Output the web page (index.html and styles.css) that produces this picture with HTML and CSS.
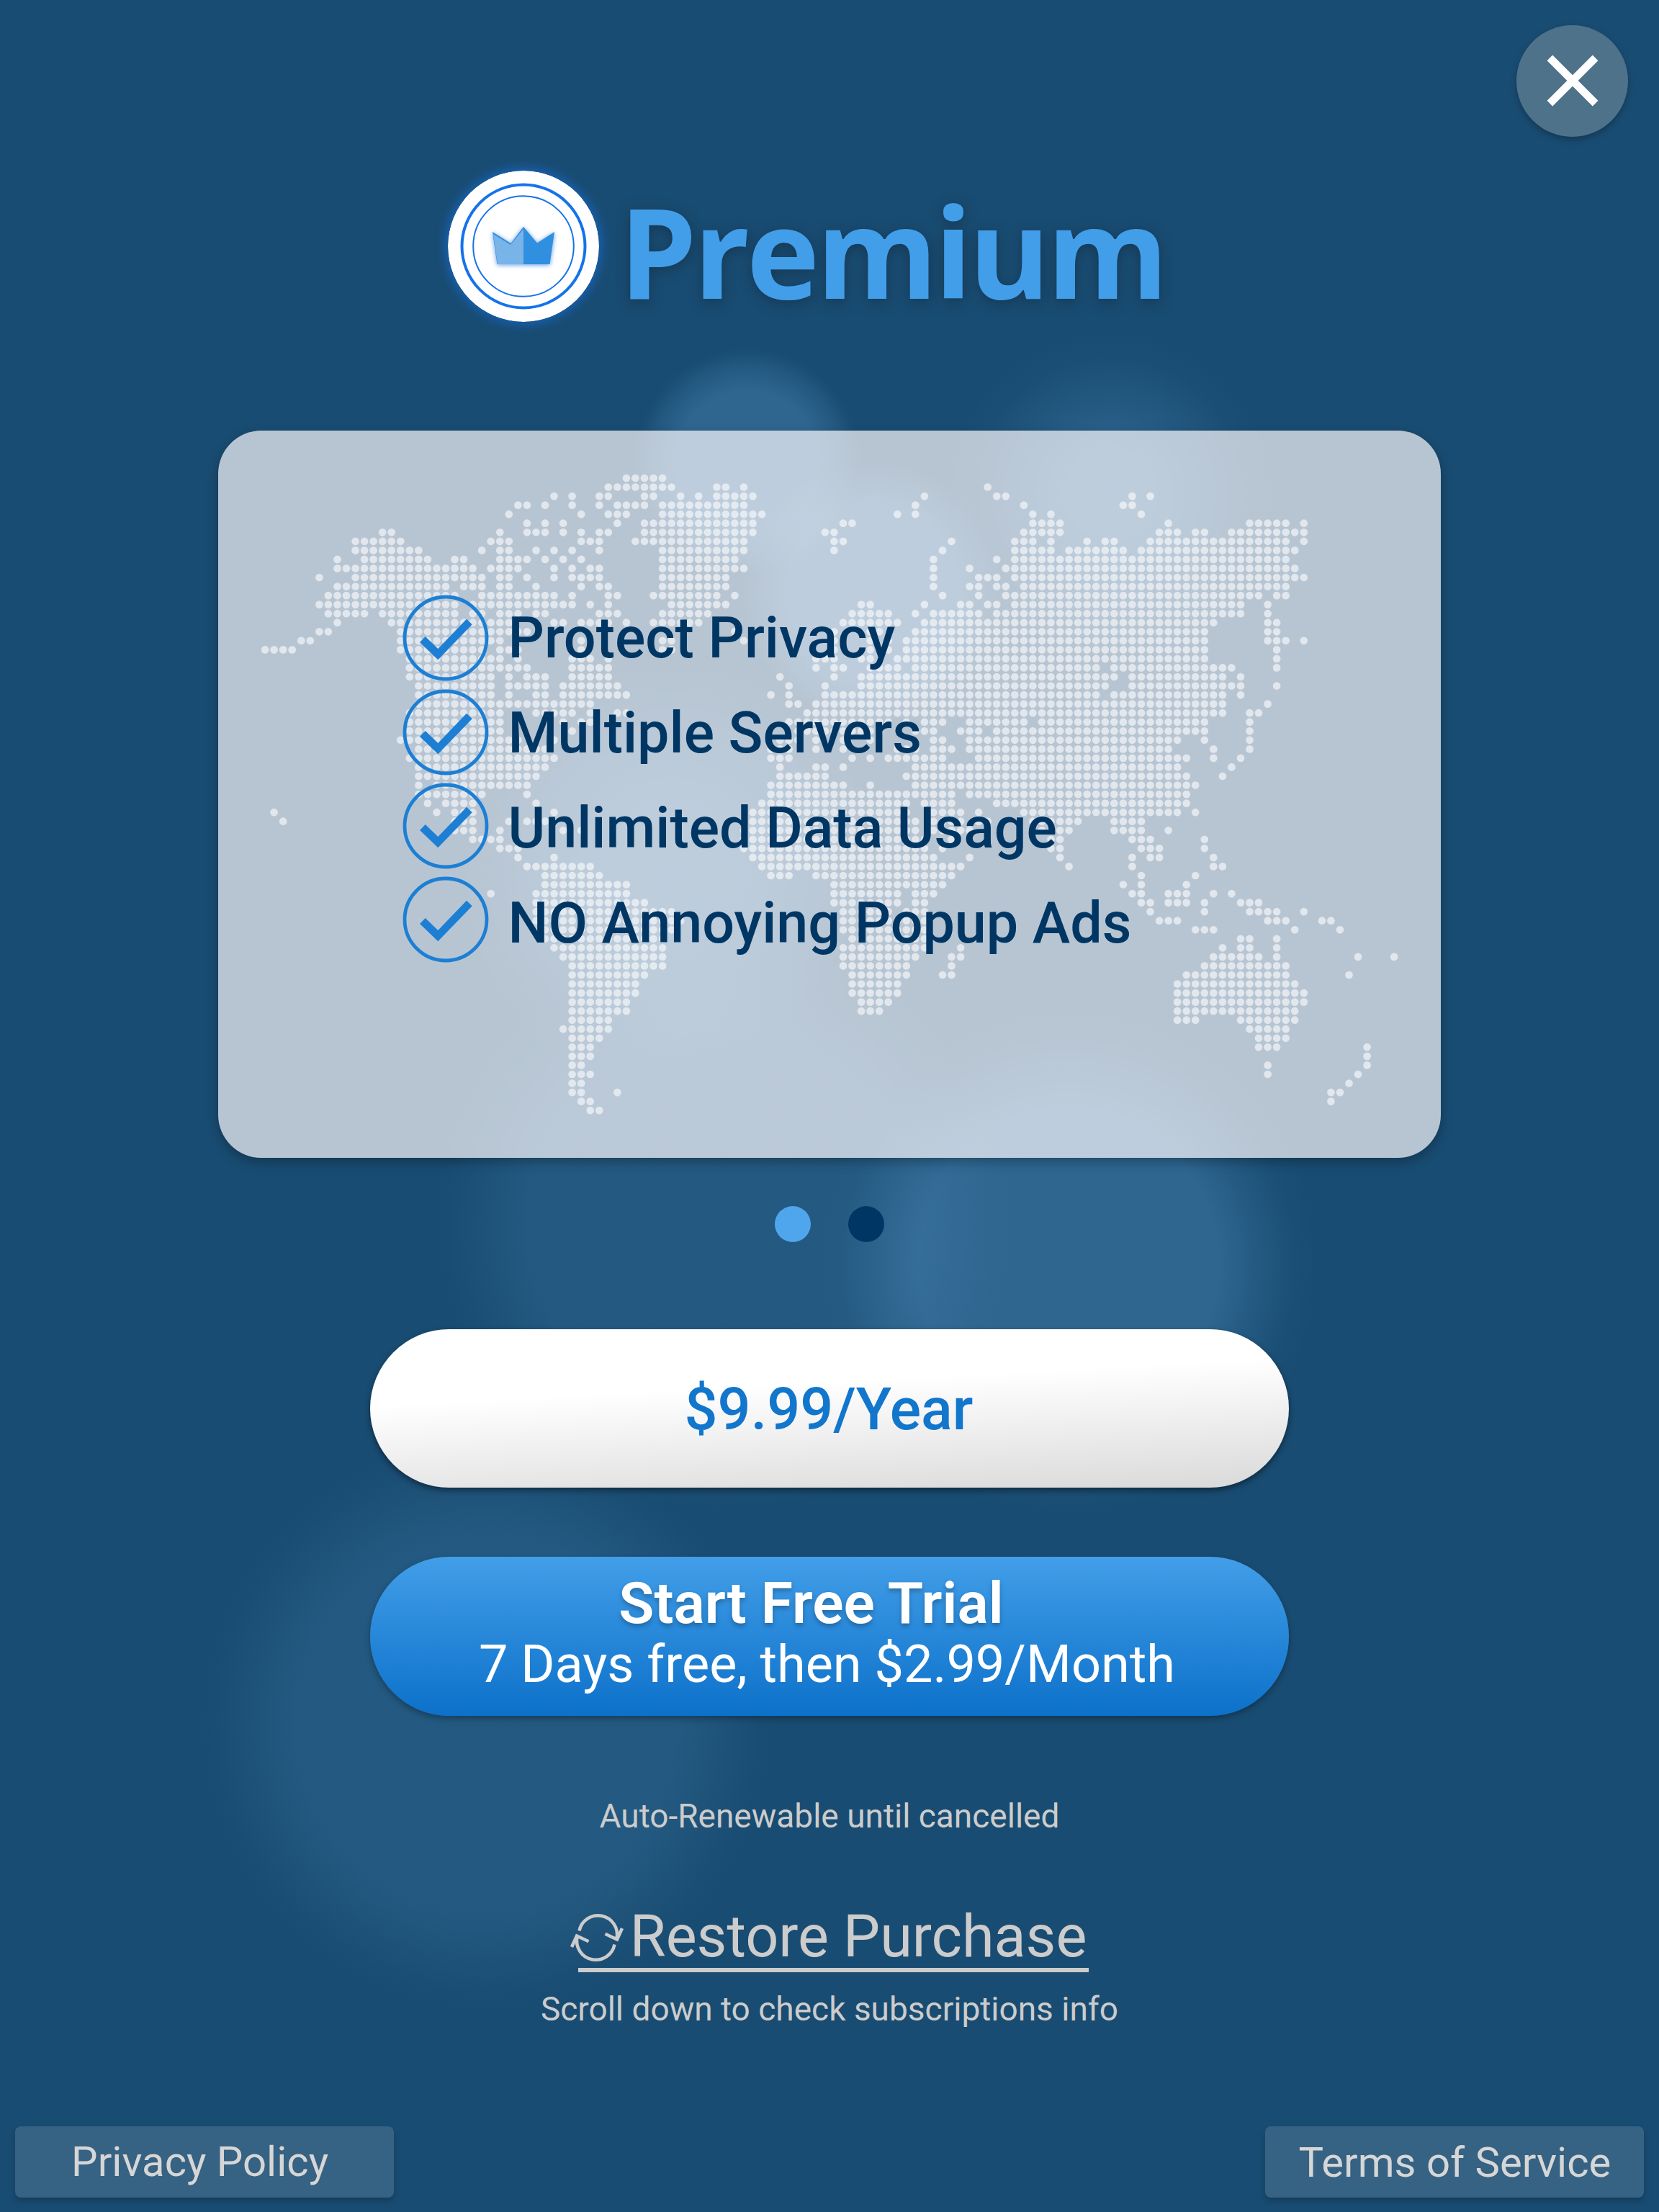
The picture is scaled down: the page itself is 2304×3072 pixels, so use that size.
FILE: index.html
```html
<!DOCTYPE html>
<html lang="en">
<head>
<meta charset="utf-8">
<title>Premium</title>
<link rel="stylesheet" href="styles.css">
</head>
<body>
<main class="page">
  <div class="topbar">
    <button class="close" aria-label="Close">
      <svg viewBox="-40 -40 80 80" width="80" height="80"><path d="M-31.6-31.6 31.6 31.6M31.6-31.6-31.6 31.6" stroke="#fff" stroke-width="10.7" fill="none"/></svg>
    </button>
  </div>

  <header class="brand">
    <svg class="badge" viewBox="-105 -105 210 210">
      <circle r="105" fill="#fff"/>
      <circle r="85.5" fill="none" stroke="#1573ea" stroke-width="4"/>
      <circle r="69.8" fill="none" stroke="#1573ea" stroke-width="2"/>
      <g class="crown">
        <path d="M-43-20-17.500-4 0-27 19-4.500 43-20 36.500 25H-36.500Z" fill="#3090df"/>
        <path d="M-42-17-18-2 0-24V25H-36Z" fill="#78b4e8"/>
      </g>
    </svg>
    <h1 class="title">Premium</h1>
  </header>

  <section class="card">
    <svg class="map" viewBox="0 0 1698 1010"><path id="map-dots"/></svg>
    <div class="features">
      <div class="checks">
        <svg class="check" viewBox="-60 -60 120 120"><circle r="57"/><path d="M-28.300-2-10.700 15 29-26.300 36.700-18.700-10.700 30.300-36 6Z"/></svg>
        <svg class="check" viewBox="-60 -60 120 120"><circle r="57"/><path d="M-28.300-2-10.700 15 29-26.300 36.700-18.700-10.700 30.300-36 6Z"/></svg>
        <svg class="check" viewBox="-60 -60 120 120"><circle r="57"/><path d="M-28.300-2-10.700 15 29-26.300 36.700-18.700-10.700 30.300-36 6Z"/></svg>
        <svg class="check" viewBox="-60 -60 120 120"><circle r="57"/><path d="M-28.300-2-10.700 15 29-26.300 36.700-18.700-10.700 30.300-36 6Z"/></svg>
      </div>
      <ul class="labels">
        <li>Protect Privacy</li>
        <li>Multiple Servers</li>
        <li>Unlimited Data Usage</li>
        <li>NO Annoying Popup Ads</li>
      </ul>
    </div>
  </section>

  <div class="pager"><span class="dot active"></span><span class="dot"></span></div>

  <button class="plan yearly">$9.99/Year</button>
  <button class="plan trial">
    <span class="trial-title">Start Free Trial</span>
    <span class="trial-note">7 Days free, then $2.99/Month</span>
  </button>

  <p class="note renew">Auto-Renewable until cancelled</p>

  <a class="restore">
    <svg class="restore-icon" viewBox="-38 -38 76 76" fill="none" stroke="#ccc" stroke-width="4.500">
      <path d="M-24.500-9.500A26.300 26.300 0 0 1 27.500 1M11.500-5.300 28 2.500 35-13"/>
      <path d="M24.500 9.500A26.300 26.300 0 0 1-27.500-1M-11.500 5.300-28-2.500-35 13"/>
    </svg>
    <span>Restore Purchase</span>
  </a>

  <p class="note scroll">Scroll down to check subscriptions info</p>

  <footer class="footer">
    <a class="legal privacy">Privacy Policy</a>
    <a class="legal terms">Terms of Service</a>
  </footer>
</main>
<script src="map.js"></script>
</body>
</html>
```
FILE: styles.css
```css
* { box-sizing: border-box; }
body { margin: 0; font-family: Roboto, "Liberation Sans", sans-serif; background: #194c72; }
button { border: 0; font-family: inherit; padding: 0; }

.page {
  --b: 78, 141, 188;
  width: 2304px;
  height: 3072px;
  display: flex;
  flex-direction: column;
  align-items: center;
  background:
    radial-gradient(circle 158px at 1038px 641px, rgba(var(--b), .4) 62%, rgba(var(--b), .2) 83%, rgba(var(--b), .04) 95%, rgba(var(--b), 0) 100%),
    radial-gradient(circle 225px at 1542px 685px, rgba(var(--b), .4) 0, rgba(var(--b), .37) 28%, rgba(var(--b), .18) 58%, rgba(var(--b), .04) 84%, rgba(var(--b), 0) 100%),
    radial-gradient(circle 180px at 1212px 822px, rgba(var(--b), .4) 66%, rgba(var(--b), .2) 82%, rgba(var(--b), 0) 100%),
    radial-gradient(circle 290px at 933px 1215px, rgba(var(--b), .4) 0, rgba(var(--b), .36) 35%, rgba(var(--b), .2) 65%, rgba(var(--b), .05) 88%, rgba(var(--b), 0) 100%),
    radial-gradient(circle 400px at 1005px 1700px, rgba(var(--b), .2) 68%, rgba(var(--b), .1) 82%, rgba(var(--b), .02) 95%, rgba(var(--b), 0) 100%),
    radial-gradient(circle 350px at 1483px 1755px, rgba(var(--b), .4) 60%, rgba(var(--b), .2) 76%, rgba(var(--b), .04) 90%, rgba(var(--b), 0) 100%),
    radial-gradient(circle 400px at 675px 2395px, rgba(var(--b), .2) 66%, rgba(var(--b), .1) 81%, rgba(var(--b), .02) 94%, rgba(var(--b), 0) 100%),
    #194c72;
}

.topbar { align-self: stretch; display: flex; justify-content: flex-end; padding: 34.500px 42.600px 0 0; }
.close {
  width: 155.500px;
  height: 155.500px;
  border-radius: 50%;
  background: #4f728b;
  box-shadow: 0 4px 10px rgba(0, 0, 0, .25);
  display: flex;
  align-items: center;
  justify-content: center;
}

.brand { align-self: flex-start; display: flex; height: 210px; margin: 46.600px 0 0 621.600px; }
.badge { width: 210px; height: 210px; border-radius: 50%; box-shadow: 0 0 16px 2px #1766c4; }
.crown { filter: drop-shadow(0 1px 3px rgba(30, 110, 230, .7)); }
.title {
  margin: 5px 0 0 28px;
  font: 700 175px/210px "Open Sans", "Noto Sans", sans-serif;
  letter-spacing: -4.500px;
  color: #429ee8;
  text-shadow: 0 4px 18px rgba(20, 40, 60, .55);
  transform: scaleX(.98);
  transform-origin: left center;
}

.card {
  position: relative;
  width: 1698px;
  height: 1010px;
  margin-top: 151.400px;
  padding: 222px 0 0 256px;
  border-radius: 60px;
  background: rgba(255, 252, 255, .69);
  box-shadow: 0 6px 16px rgba(0, 0, 0, .28);
}
.map { position: absolute; inset: 0; width: 1698px; height: 1010px; }
#map-dots { fill: none; stroke: rgba(255, 255, 255, .58); stroke-width: 10.700px; stroke-linecap: round; }
.features { position: relative; display: flex; }
.checks { display: flex; flex-direction: column; gap: 10.400px; padding-top: 6.300px; }
.check { width: 120px; height: 120px; }
.check circle { fill: none; stroke: #1d7fd4; stroke-width: 4.800px; }
.check path { fill: #1d7fd4; }
.labels { list-style: none; margin: 0 0 0 26.500px; padding: 0; font-weight: 500; font-size: 79px; line-height: 132px; color: #003663; white-space: nowrap; }

.pager { display: flex; gap: 51.300px; margin-top: 67px; }
.dot { width: 50px; height: 50px; border-radius: 50%; background: #003663; }
.dot.active { background: #50a6ed; }

.plan { width: 1275.400px; height: 220.500px; border-radius: 110px; }
.yearly {
  margin-top: 121px;
  padding: 2px 2px 0 0;
  background: linear-gradient(177deg, #fff 37%, #d9d9d9);
  box-shadow: 0 4px 8px rgba(0, 0, 0, .45);
  color: #1276cc;
  font-weight: 500;
  font-size: 81px;
}
.trial {
  margin-top: 96px;
  padding-top: 20.500px;
  display: flex;
  flex-direction: column;
  align-items: center;
  background: linear-gradient(#429ee8, #0c71ca);
  box-shadow: 0 4px 8px rgba(0, 0, 0, .3);
  color: #fff;
}
.trial-title { font-size: 80.500px; font-weight: 600; line-height: 88px; margin-right: 51px; text-shadow: 0 4px 6px rgba(0, 0, 0, .25); }
.trial-note { font-size: 72px; line-height: 82px; margin-right: 7px; }

.note { margin: 0; font-size: 46px; line-height: 60px; color: #ccc; }
.renew { margin-top: 109.500px; }
.restore {
  display: flex;
  width: 709.500px;
  margin: 94.400px 0 0 11px;
  border-bottom: 6px solid #ccc;
  font-size: 81px;
  line-height: 86px;
  color: #ccc;
  white-space: nowrap;
}
.restore-icon { flex: none; width: 76px; height: 76px; margin: 6px 8px 0 -12px; }
.scroll { margin-top: 21.500px; }

.footer { align-self: stretch; display: flex; justify-content: space-between; margin-top: 133px; padding: 0 20.600px; }
.legal {
  width: 526px;
  height: 99px;
  border-radius: 8px;
  background: #366283;
  box-shadow: 0 5px 8px rgba(0, 0, 0, .2);
  text-align: center;
  font-size: 58px;
  line-height: 99px;
  color: #d6d6d6;
}
.privacy { padding-right: 12px; }
.terms { line-height: 101px; }
```
FILE: map.js
```js
// Dotted world map: one entry per row, listing the filled column ranges.
const rows = [
  "40-44",
  "38-45 50-51 53 80",
  "32 34 37-38 42-43 46 48 50-54 73 81-82 96 98",
  "28-29 31 34 37 39-42 44-53 72 84 95-96",
  "27 35 38-40 44-55 70 72 85 87 97",
  "29 31 33 39 42-54 64-65 85-88 100 109-113 115",
  "13-14 26 29-31 33 35 37-38 42-54 62-63 84-88 99-101 103-104 107-115",
  "10-15 25-27 35-37 41-53 63-64 76 83-85 87 91 93-94 98-113 115",
  "10-17 24 26-27 30 32 34 37 44-53 63 75 83-87 89-95 97-114",
  "8 11-18 21-22 26-29 31 33 35 44-52 74 81 83-113",
  "8-23 25-28 32 34 36-37 44-53 74 78 82-114",
  "6 10-24 26-27 29 32 34-37 44-51 74 79-81 83-115",
  "8-20 22-24 26-27 30 35 37-38 44-51 74 78-79 81-82 84-113",
  "7-21 24-32 34 38-39 43-50 52 75 79 82-110 112-113",
  "6-21 23-34 36 38 45-51 66-67 73 77-78 80-81 83-108 111",
  "7-11 13-21 23-24 26-28 30-31 37-39 44-49 65-69 72 74-79 81-108 111",
  "8 14-27 32-33 35-38 40 43-48 64-70 73-105 111-112",
  "6-7 15-29 52 63 67-68 72-104 111-112",
  "4-5 15-26 35 44-45 53 63 67 69 71-104 111-113 115",
  "0-3 15-24 26-28 35 44-45 63 67 69 71-104 112",
  "16-26 28 34-36 38 61-63 66-67 70-104 112",
  "16-29 34-38 61 63-64 67-70 72-92 94-107 112",
  "16-25 27 29-31 34-38 57 63 66-94 96-106 108",
  "17-25 27-31 33-39 58 62 66-93 96-108 112",
  "17-25 27 30-31 33-40 56 58 62-92 94-106 108",
  "17-36 58-59 61-106 111",
  "16-26 30-34 36 39-40 60-106 109-110",
  "16-26 33 35-36 58-69 71 73-75 78-84 86-104 109",
  "16-26 34 59-68 72-74 77-79 81-104 109",
  "15-28 32 57-59 61 64 67 74-75 78-101 104 109",
  "17-31 56-58 61 64 70-72 74-76 78-100 105 109",
  "16-32 56-58 65 67 69-75 79-102 105 108",
  "17-31 57 61-62 64 72-101 107",
  "17-30 57-62 71-102 106",
  "17 19-29 56-64 67 72-103",
  "17-24 29 56-76 78-102",
  "18 20-23 30 55-71 73-76 81-102",
  "1 19 21-23 32 54-71 74-77 79 84-101 103",
  "2 21-23 27 29-31 54-72 74-77 79-80 85-90 94-97",
  "21-23 26 33 35 53-72 74-78 86-89 94-97 100",
  "23-26 53-73 76 87-88 96-98 104",
  "26-28 53-73 75 87-88 97-99 104",
  "28 32 54-74 78 88 96 98-99 105",
  "29-36 55-77 89 96 105-106",
  "31-37 56-58 61-76 97 103",
  "31-40 63-75 95 97 102",
  "25 30-40 63-70 72-74 96-97 100-102 105 107",
  "30-42 63-70 72-73 97-98 100-102 104 108-110",
  "30-45 64-69 71-73 98 104 109-112 115",
  "30-46 64-73 99-101 111-113 117-118",
  "31-45 64-73 103-105 114 119",
  "31-44 65-73 108-109 112",
  "32-44 64-73 77 106 108-109 112",
  "33-44 64-72 76-77 105-110 112 121 125",
  "34-44 64-71 76 104-113",
  "34-42 65-71 75-76 102-113 120",
  "34-41 65-70 101-114",
  "34-41 65-70 101-115",
  "34-40 66-69 101-115",
  "34-40 66-68 101-114",
  "34-38 101-103 108-114",
  "33-38 109-113",
  "34-37 110-113",
  "34-36 110-112 122",
  "34-36 122",
  "34-35 111 122",
  "34-36 111 121",
  "34-35 120",
  "34-35 39 118-119",
  "35-36 118",
  "36-37"
];

const PITCH = 12.545;
const LEFT = 65.1;
const TOP = 66;

let d = "";
rows.forEach((row, r) => {
  for (const range of row.split(" ")) {
    const [from, to = from] = range.split("-").map(Number);
    for (let c = from; c <= to; c++) {
      d += `M${(LEFT + c * PITCH).toFixed(1)} ${(TOP + r * PITCH).toFixed(1)}h0`;
    }
  }
});
document.getElementById("map-dots").setAttribute("d", d);
```
